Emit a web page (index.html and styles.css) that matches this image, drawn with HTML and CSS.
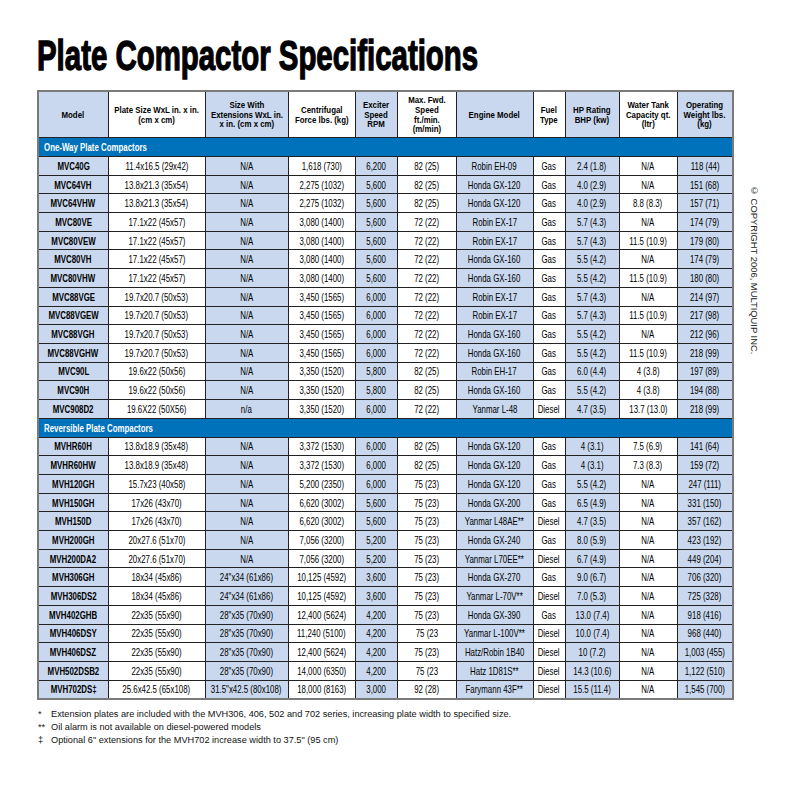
FILE: index.html
```html
<!DOCTYPE html>
<html lang="en">
<head>
<meta charset="utf-8">
<title>Plate Compactor Specifications</title>
<link rel="stylesheet" href="styles.css">
</head>
<body>
<div class="page">
  <h1 class="title"><span class="title-text">Plate Compactor Specifications</span></h1>
  <div class="main">
    <table class="specs">
      <colgroup>
        <col class="c-model sh">
        <col class="c-plate">
        <col class="c-ext sh">
        <col class="c-force">
        <col class="c-rpm sh">
        <col class="c-speed">
        <col class="c-engine sh">
        <col class="c-fuel">
        <col class="c-hp sh">
        <col class="c-water">
        <col class="c-weight sh">
      </colgroup>
      <thead>
        <tr class="head">
          <th><span>Model</span></th>
          <th><span>Plate Size WxL in. x in.<br>(cm x cm)</span></th>
          <th><span>Size With<br>Extensions WxL in.<br>x in. (cm x cm)</span></th>
          <th><span>Centrifugal<br>Force lbs. (kg)</span></th>
          <th><span>Exciter<br>Speed<br>RPM</span></th>
          <th><span>Max. Fwd.<br>Speed<br>ft./min.<br>(m/min)</span></th>
          <th><span>Engine Model</span></th>
          <th><span>Fuel<br>Type</span></th>
          <th><span>HP Rating<br>BHP (kw)</span></th>
          <th><span>Water Tank<br>Capacity qt.<br>(ltr)</span></th>
          <th><span>Operating<br>Weight lbs.<br>(kg)</span></th>
        </tr>
      </thead>
      <tbody>
        <tr class="section"><td colspan="11"><span>One-Way Plate Compactors</span></td></tr>
        <tr><td><span>MVC40G</span></td><td><span>11.4x16.5 (29x42)</span></td><td><span>N/A</span></td><td><span>1,618 (730)</span></td><td><span>6,200</span></td><td><span>82 (25)</span></td><td><span>Robin EH-09</span></td><td><span>Gas</span></td><td><span>2.4 (1.8)</span></td><td><span>N/A</span></td><td><span>118 (44)</span></td></tr>
        <tr><td><span>MVC64VH</span></td><td><span>13.8x21.3 (35x54)</span></td><td><span>N/A</span></td><td><span>2,275 (1032)</span></td><td><span>5,600</span></td><td><span>82 (25)</span></td><td><span>Honda GX-120</span></td><td><span>Gas</span></td><td><span>4.0 (2.9)</span></td><td><span>N/A</span></td><td><span>151 (68)</span></td></tr>
        <tr><td><span>MVC64VHW</span></td><td><span>13.8x21.3 (35x54)</span></td><td><span>N/A</span></td><td><span>2,275 (1032)</span></td><td><span>5,600</span></td><td><span>82 (25)</span></td><td><span>Honda GX-120</span></td><td><span>Gas</span></td><td><span>4.0 (2.9)</span></td><td><span>8.8 (8.3)</span></td><td><span>157 (71)</span></td></tr>
        <tr><td><span>MVC80VE</span></td><td><span>17.1x22 (45x57)</span></td><td><span>N/A</span></td><td><span>3,080 (1400)</span></td><td><span>5,600</span></td><td><span>72 (22)</span></td><td><span>Robin EX-17</span></td><td><span>Gas</span></td><td><span>5.7 (4.3)</span></td><td><span>N/A</span></td><td><span>174 (79)</span></td></tr>
        <tr><td><span>MVC80VEW</span></td><td><span>17.1x22 (45x57)</span></td><td><span>N/A</span></td><td><span>3,080 (1400)</span></td><td><span>5,600</span></td><td><span>72 (22)</span></td><td><span>Robin EX-17</span></td><td><span>Gas</span></td><td><span>5.7 (4.3)</span></td><td><span>11.5 (10.9)</span></td><td><span>179 (80)</span></td></tr>
        <tr><td><span>MVC80VH</span></td><td><span>17.1x22 (45x57)</span></td><td><span>N/A</span></td><td><span>3,080 (1400)</span></td><td><span>5,600</span></td><td><span>72 (22)</span></td><td><span>Honda GX-160</span></td><td><span>Gas</span></td><td><span>5.5 (4.2)</span></td><td><span>N/A</span></td><td><span>174 (79)</span></td></tr>
        <tr><td><span>MVC80VHW</span></td><td><span>17.1x22 (45x57)</span></td><td><span>N/A</span></td><td><span>3,080 (1400)</span></td><td><span>5,600</span></td><td><span>72 (22)</span></td><td><span>Honda GX-160</span></td><td><span>Gas</span></td><td><span>5.5 (4.2)</span></td><td><span>11.5 (10.9)</span></td><td><span>180 (80)</span></td></tr>
        <tr><td><span>MVC88VGE</span></td><td><span>19.7x20.7 (50x53)</span></td><td><span>N/A</span></td><td><span>3,450 (1565)</span></td><td><span>6,000</span></td><td><span>72 (22)</span></td><td><span>Robin EX-17</span></td><td><span>Gas</span></td><td><span>5.7 (4.3)</span></td><td><span>N/A</span></td><td><span>214 (97)</span></td></tr>
        <tr><td><span>MVC88VGEW</span></td><td><span>19.7x20.7 (50x53)</span></td><td><span>N/A</span></td><td><span>3,450 (1565)</span></td><td><span>6,000</span></td><td><span>72 (22)</span></td><td><span>Robin EX-17</span></td><td><span>Gas</span></td><td><span>5.7 (4.3)</span></td><td><span>11.5 (10.9)</span></td><td><span>217 (98)</span></td></tr>
        <tr><td><span>MVC88VGH</span></td><td><span>19.7x20.7 (50x53)</span></td><td><span>N/A</span></td><td><span>3,450 (1565)</span></td><td><span>6,000</span></td><td><span>72 (22)</span></td><td><span>Honda GX-160</span></td><td><span>Gas</span></td><td><span>5.5 (4.2)</span></td><td><span>N/A</span></td><td><span>212 (96)</span></td></tr>
        <tr><td><span>MVC88VGHW</span></td><td><span>19.7x20.7 (50x53)</span></td><td><span>N/A</span></td><td><span>3,450 (1565)</span></td><td><span>6,000</span></td><td><span>72 (22)</span></td><td><span>Honda GX-160</span></td><td><span>Gas</span></td><td><span>5.5 (4.2)</span></td><td><span>11.5 (10.9)</span></td><td><span>218 (99)</span></td></tr>
        <tr><td><span>MVC90L</span></td><td><span>19.6x22 (50x56)</span></td><td><span>N/A</span></td><td><span>3,350 (1520)</span></td><td><span>5,800</span></td><td><span>82 (25)</span></td><td><span>Robin EH-17</span></td><td><span>Gas</span></td><td><span>6.0 (4.4)</span></td><td><span>4 (3.8)</span></td><td><span>197 (89)</span></td></tr>
        <tr><td><span>MVC90H</span></td><td><span>19.6x22 (50x56)</span></td><td><span>N/A</span></td><td><span>3,350 (1520)</span></td><td><span>5,800</span></td><td><span>82 (25)</span></td><td><span>Honda GX-160</span></td><td><span>Gas</span></td><td><span>5.5 (4.2)</span></td><td><span>4 (3.8)</span></td><td><span>194 (88)</span></td></tr>
        <tr><td><span>MVC908D2</span></td><td><span>19.6X22 (50X56)</span></td><td><span>n/a</span></td><td><span>3,350 (1520)</span></td><td><span>6,000</span></td><td><span>72 (22)</span></td><td><span>Yanmar L-48</span></td><td><span>Diesel</span></td><td><span>4.7 (3.5)</span></td><td><span>13.7 (13.0)</span></td><td><span>218 (99)</span></td></tr>
        <tr class="section"><td colspan="11"><span>Reversible Plate Compactors</span></td></tr>
        <tr><td><span>MVHR60H</span></td><td><span>13.8x18.9 (35x48)</span></td><td><span>N/A</span></td><td><span>3,372 (1530)</span></td><td><span>6,000</span></td><td><span>82 (25)</span></td><td><span>Honda GX-120</span></td><td><span>Gas</span></td><td><span>4 (3.1)</span></td><td><span>7.5 (6.9)</span></td><td><span>141 (64)</span></td></tr>
        <tr><td><span>MVHR60HW</span></td><td><span>13.8x18.9 (35x48)</span></td><td><span>N/A</span></td><td><span>3,372 (1530)</span></td><td><span>6,000</span></td><td><span>82 (25)</span></td><td><span>Honda GX-120</span></td><td><span>Gas</span></td><td><span>4 (3.1)</span></td><td><span>7.3 (8.3)</span></td><td><span>159 (72)</span></td></tr>
        <tr><td><span>MVH120GH</span></td><td><span>15.7x23 (40x58)</span></td><td><span>N/A</span></td><td><span>5,200 (2350)</span></td><td><span>6,000</span></td><td><span>75 (23)</span></td><td><span>Honda GX-120</span></td><td><span>Gas</span></td><td><span>5.5 (4.2)</span></td><td><span>N/A</span></td><td><span>247 (111)</span></td></tr>
        <tr><td><span>MVH150GH</span></td><td><span>17x26 (43x70)</span></td><td><span>N/A</span></td><td><span>6,620 (3002)</span></td><td><span>5,600</span></td><td><span>75 (23)</span></td><td><span>Honda GX-200</span></td><td><span>Gas</span></td><td><span>6.5 (4.9)</span></td><td><span>N/A</span></td><td><span>331 (150)</span></td></tr>
        <tr><td><span>MVH150D</span></td><td><span>17x26 (43x70)</span></td><td><span>N/A</span></td><td><span>6,620 (3002)</span></td><td><span>5,600</span></td><td><span>75 (23)</span></td><td><span>Yanmar L48AE**</span></td><td><span>Diesel</span></td><td><span>4.7 (3.5)</span></td><td><span>N/A</span></td><td><span>357 (162)</span></td></tr>
        <tr><td><span>MVH200GH</span></td><td><span>20x27.6 (51x70)</span></td><td><span>N/A</span></td><td><span>7,056 (3200)</span></td><td><span>5,200</span></td><td><span>75 (23)</span></td><td><span>Honda GX-240</span></td><td><span>Gas</span></td><td><span>8.0 (5.9)</span></td><td><span>N/A</span></td><td><span>423 (192)</span></td></tr>
        <tr><td><span>MVH200DA2</span></td><td><span>20x27.6 (51x70)</span></td><td><span>N/A</span></td><td><span>7,056 (3200)</span></td><td><span>5,200</span></td><td><span>75 (23)</span></td><td><span>Yanmar L70EE**</span></td><td><span>Diesel</span></td><td><span>6.7 (4.9)</span></td><td><span>N/A</span></td><td><span>449 (204)</span></td></tr>
        <tr><td><span>MVH306GH</span></td><td><span>18x34 (45x86)</span></td><td><span>24"x34 (61x86)</span></td><td><span>10,125 (4592)</span></td><td><span>3,600</span></td><td><span>75 (23)</span></td><td><span>Honda GX-270</span></td><td><span>Gas</span></td><td><span>9.0 (6.7)</span></td><td><span>N/A</span></td><td><span>706 (320)</span></td></tr>
        <tr><td><span>MVH306DS2</span></td><td><span>18x34 (45x86)</span></td><td><span>24"x34 (61x86)</span></td><td><span>10,125 (4592)</span></td><td><span>3,600</span></td><td><span>75 (23)</span></td><td><span>Yanmar L-70V**</span></td><td><span>Diesel</span></td><td><span>7.0 (5.3)</span></td><td><span>N/A</span></td><td><span>725 (328)</span></td></tr>
        <tr><td><span>MVH402GHB</span></td><td><span>22x35 (55x90)</span></td><td><span>28"x35 (70x90)</span></td><td><span>12,400 (5624)</span></td><td><span>4,200</span></td><td><span>75 (23)</span></td><td><span>Honda GX-390</span></td><td><span>Gas</span></td><td><span>13.0 (7.4)</span></td><td><span>N/A</span></td><td><span>918 (416)</span></td></tr>
        <tr><td><span>MVH406DSY</span></td><td><span>22x35 (55x90)</span></td><td><span>28"x35 (70x90)</span></td><td><span>11,240 (5100)</span></td><td><span>4,200</span></td><td><span>75 (23</span></td><td><span>Yanmar L-100V**</span></td><td><span>Diesel</span></td><td><span>10.0 (7.4)</span></td><td><span>N/A</span></td><td><span>968 (440)</span></td></tr>
        <tr><td><span>MVH406DSZ</span></td><td><span>22x35 (55x90)</span></td><td><span>28"x35 (70x90)</span></td><td><span>12,400 (5624)</span></td><td><span>4,200</span></td><td><span>75 (23)</span></td><td><span>Hatz/Robin 1B40</span></td><td><span>Diesel</span></td><td><span>10 (7.2)</span></td><td><span>N/A</span></td><td><span>1,003 (455)</span></td></tr>
        <tr><td><span>MVH502DSB2</span></td><td><span>22x35 (55x90)</span></td><td><span>28"x35 (70x90)</span></td><td><span>14,000 (6350)</span></td><td><span>4,200</span></td><td><span>75 (23</span></td><td><span>Hatz 1D81S**</span></td><td><span>Diesel</span></td><td><span>14.3 (10.6)</span></td><td><span>N/A</span></td><td><span>1,122 (510)</span></td></tr>
        <tr><td><span>MVH702DS‡</span></td><td><span>25.6x42.5 (65x108)</span></td><td><span>31.5"x42.5 (80x108)</span></td><td><span>18,000 (8163)</span></td><td><span>3,000</span></td><td><span>92 (28)</span></td><td><span>Farymann 43F**</span></td><td><span>Diesel</span></td><td><span>15.5 (11.4)</span></td><td><span>N/A</span></td><td><span>1,545 (700)</span></td></tr>
      </tbody>
    </table>
    <div class="copyright">© COPYRIGHT 2006, MULTIQUIP INC.</div>
  </div>
  <ul class="notes">
    <li><span class="mark">*</span><span>Extension plates are included with the MVH306, 406, 502 and 702 series, increasing plate width to specified size.</span></li>
    <li><span class="mark">**</span><span>Oil alarm is not available on diesel-powered models</span></li>
    <li><span class="mark">‡</span><span>Optional 6" extensions for the MVH702 increase width to 37.5" (95 cm)</span></li>
  </ul>
</div>
</body>
</html>
```

FILE: styles.css
```css
html, body {
  margin: 0;
  padding: 0;
  background: #ffffff;
}

.page {
  padding-left: 37px;
  color: #000000;
  font-family: "Liberation Sans", Arial, sans-serif;
}

.title {
  margin: 0 0 13.5px 0;
  padding-top: 34.5px;
  font-size: 42px;
  line-height: 42px;
  font-weight: bold;
  color: #000000;
  white-space: nowrap;
}

.title-text {
  display: inline-block;
  transform: scaleX(0.70);
  transform-origin: left center;
  -webkit-text-stroke: 1.3px #000000;
}

.main {
  display: flex;
  align-items: flex-start;
  gap: 15px;
}

.specs {
  border-collapse: collapse;
  table-layout: fixed;
  width: 695px;
  border: 2px solid #7a7a7a;
  font-size: 10.5px;
  line-height: 10px;
}

.c-model { width: 70px; }
.c-plate { width: 97px; }
.c-ext { width: 83px; }
.c-force { width: 67px; }
.c-rpm { width: 42px; }
.c-speed { width: 59px; }
.c-engine { width: 77px; }
.c-fuel { width: 32px; }
.c-hp { width: 54px; }
.c-water { width: 58px; }
.c-weight { width: 56px; }

.sh { background: #c9d8ee; }

.specs th,
.specs td {
  border: 1px solid #222222;
  padding: 0 2px;
  text-align: center;
  vertical-align: middle;
  white-space: nowrap;
}

.specs td > span,
.specs th > span {
  display: inline-block;
  margin: 0 -26px;
  transform: scaleX(0.75);
}

.specs th {
  font-size: 9.6px;
  font-weight: bold;
  height: 45px;
  line-height: 9.7px;
}

.specs th > span {
  transform: scaleX(0.82);
}

.specs tbody tr {
  height: 18.7px;
}

.specs tbody td:first-child {
  font-weight: bold;
}

.specs tr.section td {
  background: #0071bb;
  color: #ffffff;
  text-align: left;
  font-weight: bold;
  padding-left: 5px;
  height: 18px;
}

.specs tr.section td > span {
  margin: 0;
  transform-origin: left center;
}

.copyright {
  writing-mode: vertical-rl;
  margin-top: 95px;
  font-size: 9.4px;
  line-height: 10px;
  color: #222222;
  white-space: nowrap;
}

.notes {
  list-style: none;
  margin: 8px 0 0 0;
  padding: 0 0 0 1px;
  font-size: 9.2px;
  line-height: 13px;
  color: #111111;
}

.notes li {
  display: flex;
  height: 13px;
}

.mark {
  width: 13px;
  flex: none;
}
```
